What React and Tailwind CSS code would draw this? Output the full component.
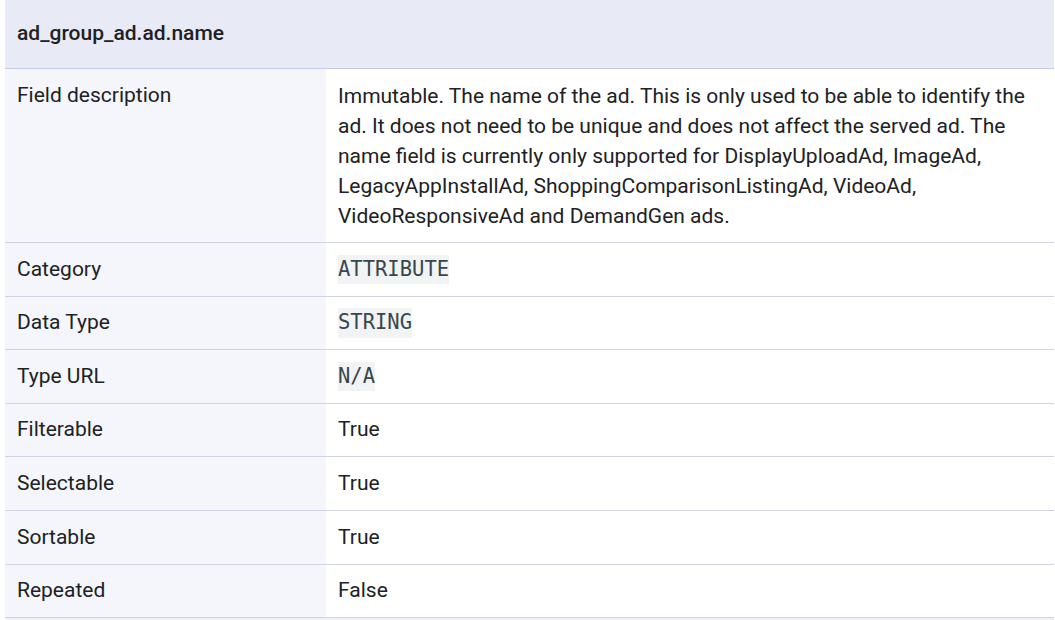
const ROWS = [
  {
    label: 'Field description',
    value:
      'Immutable. The name of the ad. This is only used to be able to identify the ad. It does not need to be unique and does not affect the served ad. The name field is currently only supported for DisplayUploadAd, ImageAd, LegacyAppInstallAd, ShoppingComparisonListingAd, VideoAd, VideoResponsiveAd and DemandGen ads.',
    tall: true,
  },
  { label: 'Category', code: 'ATTRIBUTE' },
  { label: 'Data Type', code: 'STRING' },
  { label: 'Type URL', code: 'N/A' },
  { label: 'Filterable', value: 'True' },
  { label: 'Selectable', value: 'True' },
  { label: 'Sortable', value: 'True' },
  { label: 'Repeated', value: 'False' },
];

export default function App() {
  return (
    <div className="w-[1055px] h-[620px] bg-white overflow-hidden font-['Roboto','Liberation_Sans',sans-serif] text-[21px] leading-[29.6px] text-[#202124]">
      <div className="ml-[5px] w-[1049px]">
        <div className="bg-[#e8eaf6] border-b border-[#c5cae9] px-[12px] pt-[19px] pb-[19.5px] font-medium">
          ad_group_ad.ad.name
        </div>
        {ROWS.map((r) => (
          <div key={r.label} className="flex border-b border-[#d2d4e4]">
            <div className="w-[321px] shrink-0 bg-[#f5f6fb] px-[12px] py-[11.5px]">{r.label}</div>
            <div className={r.tall ? 'flex-1 px-[12px] py-[11.5px] pr-[24px] leading-[30px]' : 'flex-1 px-[12px] py-[11.5px] pr-[24px]'}>
              {r.code ? (
                <code className="inline-block align-top bg-[#f1f3f4] text-[#37474f] leading-[29.6px] font-['DejaVu_Sans_Mono','Liberation_Mono',monospace] text-[20.5px] font-medium">
                  {r.code}
                </code>
              ) : (
                r.value
              )}
            </div>
          </div>
        ))}
        <div className="h-[4px] bg-[#f0f1f8]" />
      </div>
    </div>
  );
}
